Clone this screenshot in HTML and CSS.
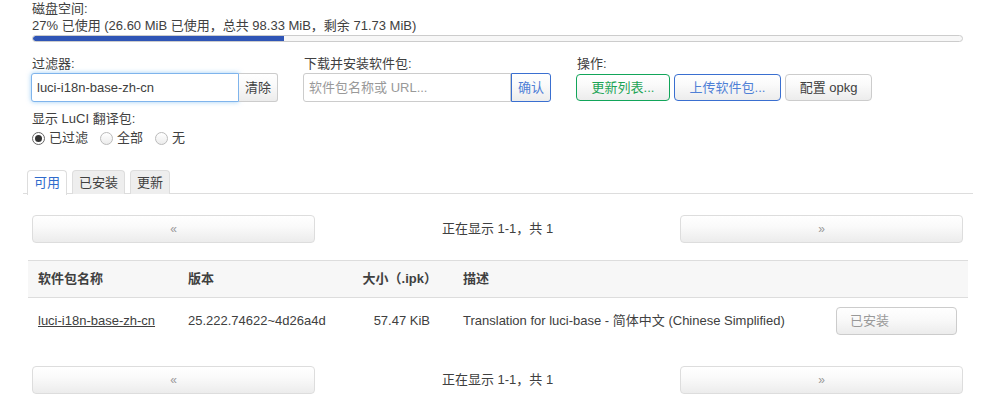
FILE: index.html
```html
<!DOCTYPE html>
<html lang="zh-CN">
<head>
<meta charset="utf-8">
<title>软件包</title>
<link rel="stylesheet" href="styles.css">
</head>
<body>
<div class="page">
  <div class="section">
    <div class="label">磁盘空间:</div>
    <div class="line">27% 已使用 (26.60 MiB 已使用，总共 98.33 MiB，剩余 71.73 MiB)</div>
    <div class="progress"><div class="progress-fill" style="width:27%"></div></div>

    <div class="controls">
      <div class="group">
        <div class="label">过滤器:</div>
        <div class="input-group">
          <div class="input focused">luci-i18n-base-zh-cn</div>
          <div class="btn addon">清除</div>
        </div>
      </div>
      <div class="group">
        <div class="label">下载并安装软件包:</div>
        <div class="input-group">
          <div class="input placeholder">软件包名称或 URL...</div>
          <div class="btn addon btn-blue">确认</div>
        </div>
      </div>
      <div class="group">
        <div class="label">操作:</div>
        <div class="actions">
          <div class="btn btn-green">更新列表...</div>
          <div class="btn btn-blue">上传软件包...</div>
          <div class="btn">配置 opkg</div>
        </div>
      </div>
    </div>

    <div class="label lang-label">显示 LuCI 翻译包:</div>
    <div class="radios">
      <span class="radio checked"></span><span class="radio-text">已过滤</span>
      <span class="radio"></span><span class="radio-text">全部</span>
      <span class="radio"></span><span class="radio-text">无</span>
    </div>
  </div>

  <ul class="tabs">
    <li class="tab active">可用</li>
    <li class="tab">已安装</li>
    <li class="tab">更新</li>
  </ul>

  <div class="section">
    <div class="pager">
      <div class="btn pager-btn">«</div>
      <div class="pager-text">正在显示 1-1，共 1</div>
      <div class="btn pager-btn">»</div>
    </div>
  </div>

  <table class="table">
    <colgroup>
      <col class="c1"><col class="c2"><col class="c3"><col class="c4"><col class="c5">
    </colgroup>
    <thead>
      <tr>
        <th>软件包名称</th>
        <th>版本</th>
        <th class="num">大小（.ipk）</th>
        <th class="desc">描述</th>
        <th></th>
      </tr>
    </thead>
    <tbody>
      <tr>
        <td><a class="pkg">luci-i18n-base-zh-cn</a></td>
        <td>25.222.74622~4d26a4d</td>
        <td class="num">57.47 KiB</td>
        <td class="desc">Translation for luci-base - 简体中文 (Chinese Simplified)</td>
        <td class="act"><div class="btn installed">已安装</div></td>
      </tr>
    </tbody>
  </table>

  <div class="section">
    <div class="pager">
      <div class="btn pager-btn">«</div>
      <div class="pager-text">正在显示 1-1，共 1</div>
      <div class="btn pager-btn">»</div>
    </div>
  </div>
</div>
</body>
</html>
```

FILE: styles.css
```css
* { box-sizing: border-box; }
html, body { margin: 0; padding: 0; background: #fff; }
body {
  font-family: "Liberation Sans", Arial, "Noto Sans CJK SC", sans-serif;
  font-size: 13px;
  line-height: 18px;
  color: #404040;
}
.page { margin: 0 27px 0 23px; }
.section { padding: 0 10px 0 9px; }

.label { line-height: 17px; }
.line { line-height: 18px; }

.progress {
  height: 7px;
  border: 1px solid #ccc;
  border-radius: 4px;
  background: #f7f7f7;
  overflow: hidden;
  margin-top: 0;
}
.progress-fill {
  height: 100%;
  background: #2f55b6;
  border-radius: 3px 0 0 3px;
}

.controls {
  display: flex;
  margin-top: 13px;
  margin-left: -1px;
}
.controls .label { line-height: 18px; margin-left: 1px; }
.group { margin-right: 25px; }
.input-group { display: flex; }
.input {
  width: 208px;
  height: 29px;
  border: 1px solid #ccc;
  border-radius: 3px 0 0 3px;
  padding: 0 5px;
  line-height: 27px;
  color: #404040;
  background: #fff;
}
.input.focused {
  border-color: #7fb4ec;
  box-shadow: 0 0 5px rgba(82, 168, 236, 0.55);
}
.input.placeholder { color: #999; }

.btn {
  display: inline-flex;
  align-items: center;
  justify-content: center;
  height: 27px;
  padding: 0 13px;
  border: 1px solid #ccc;
  border-radius: 4px;
  background: linear-gradient(#fff, #fafafa 40%, #ececec);
  color: #404040;
  white-space: nowrap;
}
.addon {
  height: 29px;
  padding: 0 6px;
  border-radius: 0 3px 3px 0;
  border-left: none;
}
.btn-blue.addon { border-left: 1px solid #3a6fd0; }
.btn-blue { border-color: #3a6fd0; color: #4f80d6; }
.btn-green { border-color: #12a55a; color: #1ea456; }

.actions { display: flex; gap: 4px; margin-top: 1px; }
.actions .btn-green { width: 94px; padding: 0; }
.actions .btn-blue { width: 107px; padding: 0; }
.actions .btn:last-child { width: 87px; padding: 0; }

.lang-label { margin-top: 8px; line-height: 18px; }
.radios {
  display: flex;
  align-items: center;
  height: 18px;
  margin-top: 1px;
}
.radio {
  width: 13px;
  height: 13px;
  border: 1px solid #bbb;
  border-radius: 50%;
  background: linear-gradient(#fff, #ececec);
  margin-right: 4px;
  position: relative;
}
.radio.checked { border-color: #666; background: #fff; }
.radio.checked::after {
  content: "";
  position: absolute;
  left: 2px; top: 2px;
  width: 7px; height: 7px;
  border-radius: 50%;
  background: #333;
}
.radio-text { margin-right: 12px; }

.tabs {
  list-style: none;
  margin: 23px 0 0 0;
  padding: 0 0 0 4px;
  display: flex;
  gap: 5px;
  border-bottom: 1px solid #ddd;
  height: 24px;
}
.tab {
  height: 24px;
  padding: 0 6px;
  border: 1px solid #ddd;
  border-bottom: none;
  border-radius: 4px 4px 0 0;
  background: #eee;
  line-height: 23px;
  color: #404040;
}
.tab.active {
  background: #fff;
  color: #2f6bcc;
  height: 25px;
}

.pager {
  display: grid;
  grid-template-columns: 283fr 365fr 283fr;
  align-items: center;
  margin-top: 21px;
}
.pager-btn {
  height: 28px;
  border-color: #ddd;
  color: #999;
  font-size: 12px;
}
.pager-text { text-align: center; }

.table {
  width: 940px;
  margin: 17px 5px 0 5px;
  border-collapse: collapse;
  table-layout: fixed;
}
.c1 { width: 150px; }
.c2 { width: 155px; }
.c3 { width: 110px; }
.c4 { width: auto; }
.c5 { width: 142px; }
.table th {
  background: #f7f7f7;
  border-top: 1px solid #ddd;
  border-bottom: 1px solid #ddd;
  height: 37px;
  padding: 0 10px;
  text-align: left;
  font-weight: bold;
  color: #404040;
}
.table td {
  height: 47px;
  padding: 0 10px;
  vertical-align: middle;
  color: #404040;
}
.table .num { text-align: right; padding-right: 13px; }
.table th.num { padding-right: 6px; }
.table .desc { padding-left: 20px; }
.table .act { text-align: right; padding-right: 11px; }
.pkg { color: #404040; text-decoration: underline; }
.installed {
  width: 121px;
  height: 28px;
  justify-content: flex-start;
  padding-left: 13px;
  color: #999;
  border-color: #ccc;
}
```
